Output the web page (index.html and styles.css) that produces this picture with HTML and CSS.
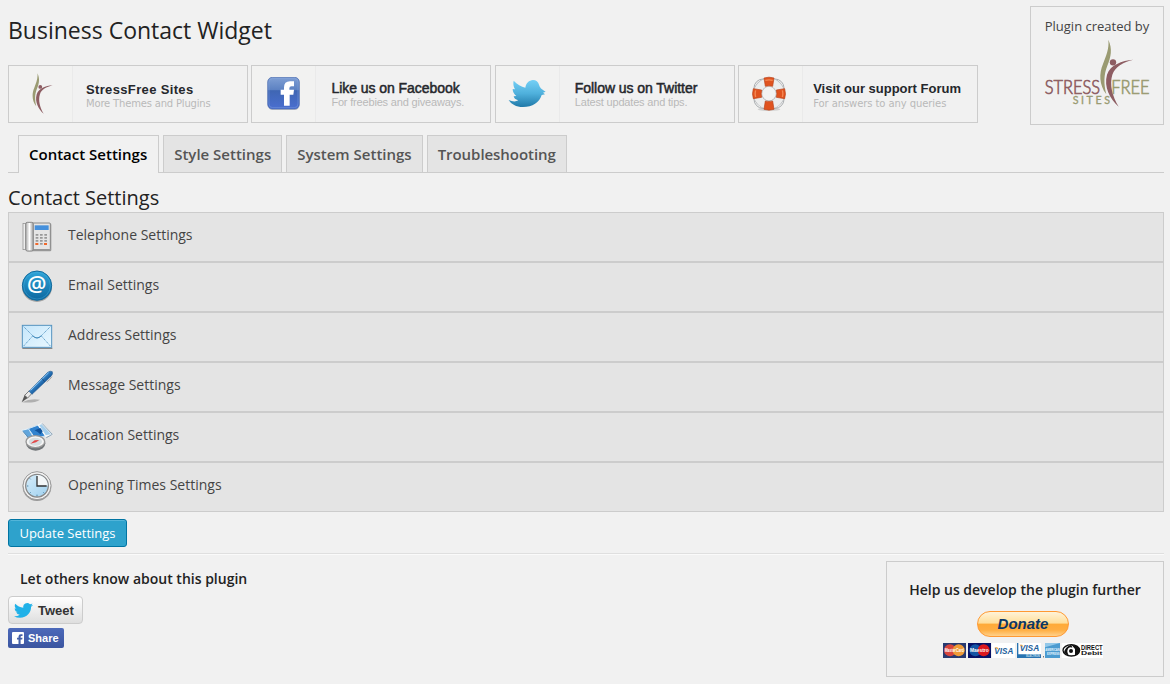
FILE: index.html
```html
<!DOCTYPE html>
<html lang="en">
<head>
<meta charset="utf-8">
<title>Business Contact Widget</title>
<link rel="stylesheet" href="styles.css">
</head>
<body>
<svg class="defs" width="0" height="0" aria-hidden="true">
  <defs>
    <symbol id="figure" viewBox="242 116 102 203">
      <path fill="#9a9b72" d="M268 117C271 145 261 165 252 190C240 218 240 252 262 281C254 250 254 222 265 195C276 168 281 145 268 117Z"/>
      <circle cx="282" cy="185" r="9.5" fill="#8d5d62"/>
      <path fill="#8d5d62" d="M343 177C308 180 274 192 264 222C254 258 272 294 299 318C280 286 271 252 280 222C288 198 312 185 343 177Z"/>
    </symbol>
    <symbol id="bird" viewBox="0 2 24 20">
      <path d="M23.953 4.57a10 10 0 01-2.825.775 4.958 4.958 0 002.163-2.723c-.951.555-2.005.959-3.127 1.184a4.92 4.92 0 00-8.384 4.482C7.69 8.095 4.067 6.13 1.64 3.162a4.822 4.822 0 00-.666 2.475c0 1.71.87 3.213 2.188 4.096a4.904 4.904 0 01-2.228-.616v.06a4.923 4.923 0 003.946 4.827 4.996 4.996 0 01-2.212.085 4.936 4.936 0 004.604 3.417 9.867 9.867 0 01-6.102 2.105c-.39 0-.779-.023-1.17-.067a13.995 13.995 0 007.557 2.209c9.053 0 13.998-7.496 13.998-13.985 0-.21 0-.42-.015-.63A9.935 9.935 0 0024 4.59z"/>
    </symbol>
    <linearGradient id="fbg" x1="0" y1="0" x2="0" y2="1"><stop offset="0" stop-color="#7f9fd4"/><stop offset=".4" stop-color="#5c81c2"/><stop offset=".42" stop-color="#3f66b3"/><stop offset="1" stop-color="#4a6fd0"/></linearGradient>
    <linearGradient id="twg" x1="0" y1="0" x2="0" y2="1"><stop offset="0" stop-color="#74d0f6"/><stop offset=".5" stop-color="#4fb0dc"/><stop offset="1" stop-color="#2079a8"/></linearGradient>
    <linearGradient id="mailg" x1="0" y1="0" x2="0" y2="1"><stop offset="0" stop-color="#2fa5d8"/><stop offset="1" stop-color="#0c67a0"/></linearGradient>
    <linearGradient id="metal" x1="0" y1="0" x2="1" y2="0"><stop offset="0" stop-color="#aaa"/><stop offset=".5" stop-color="#fff"/><stop offset="1" stop-color="#999"/></linearGradient>
    <linearGradient id="envg" x1="0" y1="0" x2="1" y2="1"><stop offset="0" stop-color="#c5e6fb"/><stop offset="1" stop-color="#e9f8ff"/></linearGradient>
    <linearGradient id="peng" x1="0" y1="0" x2="1" y2="1"><stop offset=".3" stop-color="#58a8e8"/><stop offset=".6" stop-color="#0f5599"/></linearGradient>
    <linearGradient id="faceg" x1="0" y1="0" x2="1" y2="1"><stop offset="0" stop-color="#d7edfa"/><stop offset="1" stop-color="#9fd0ee"/></linearGradient>
  </defs>
</svg>
<div class="page">
  <header class="top">
    <div class="top-main">
      <h1 class="title">Business Contact Widget</h1>
      <nav class="cards">
        <a class="card card-sites">
          <span class="card-icon"><svg width="21" height="41"><use href="#figure"/></svg></span>
          <span class="card-text"><b class="card-name">StressFree Sites</b><span class="card-sub">More Themes and Plugins</span></span>
        </a>
        <a class="card card-facebook">
          <span class="card-icon"><svg width="34" height="34" viewBox="81 49 102 102"><rect x="84" y="52" width="94" height="96" rx="14" fill="#999" opacity=".5"/><rect x="83" y="50" width="95" height="95" rx="14" fill="url(#fbg)" stroke="#4a6aae" stroke-width="2"/><rect x="87" y="54" width="87" height="87" rx="11" fill="none" stroke="#8baae0" stroke-width="2" opacity=".6"/><path fill="#fff" d="M132 135V102H122V87H132V80Q132 62 150 62H162V77H154Q148 77 148 83V87H162L160 102H149V135Z"/></svg></span>
          <span class="card-text"><b class="card-name">Like us on Facebook</b><span class="card-sub">For freebies and giveaways.</span></span>
        </a>
        <a class="card card-twitter">
          <span class="card-icon"><svg width="38" height="29" viewBox="55 57 114 87"><path fill="url(#twg)" d="M57 120C68 125 78 126 86 121C77 119 73 114 72 109L80 108C73 102 69 95 69 87L76 88C71 80 70 70 72 62C82 74 95 79 107 83C109 69 118 61 130 60C139 60 146 65 148 74C150 81 154 87 168 95L160 98L166 103L156 105C150 127 128 141 100 141C79 141 65 133 57 120Z"/></svg></span>
          <span class="card-text"><b class="card-name">Follow us on Twitter</b><span class="card-sub">Latest updates and tips.</span></span>
        </a>
        <a class="card card-forum">
          <span class="card-icon"><svg width="36" height="36" viewBox="64 48 108 108"><ellipse cx="118" cy="148" rx="34" ry="5" fill="#bbb" opacity=".6"/><g fill="none"><rect x="73" y="57" width="90" height="88" rx="27" stroke="#a9adb0" stroke-width="3"/><circle cx="118" cy="101" r="34" stroke="#b4b7ba" stroke-width="27"/><circle cx="118" cy="101" r="34" stroke="#eceded" stroke-width="23"/></g><g fill="#e0531f" stroke="#b8421a" stroke-width="2"><path d="M103 54Q118 49 133 54L129 79Q118 76 107 79Z"/><path d="M103 148Q118 153 133 148L129 123Q118 126 107 123Z"/><path d="M71 86Q66 101 71 116L96 112Q93 101 96 90Z"/><path d="M165 86Q170 101 165 116L140 112Q143 101 140 90Z"/></g><path d="M107 61Q118 58 129 61M78 91Q75 101 78 111M158 91Q161 101 158 111" fill="none" stroke="#f58a55" stroke-width="4"/></svg></span>
          <span class="card-text"><b class="card-name">Visit our support Forum</b><span class="card-sub">For answers to any queries</span></span>
        </a>
      </nav>
    </div>
    <aside class="creator">
      <span>Plugin created by</span>
      <svg class="creator-logo" width="108" height="69" viewBox="75 115 324 207"><svg x="242" y="116" width="102" height="203"><use href="#figure"/></svg><g font-family="Lato, sans-serif"><g font-weight="300" font-size="56" stroke-width="2"><text x="77" y="280" textLength="166" lengthAdjust="spacingAndGlyphs" fill="#8d5d62" stroke="#8d5d62">STRESS</text><text x="277" y="280" textLength="115" lengthAdjust="spacingAndGlyphs" fill="#9a9b72" stroke="#9a9b72">FREE</text></g><text x="161" y="311" textLength="112" font-size="32" fill="#9a9b72" stroke="#9a9b72">SITES</text></g></svg>
    </aside>
  </header>

  <nav class="tabs">
    <a class="tab tab-active">Contact Settings</a>
    <a class="tab">Style Settings</a>
    <a class="tab">System Settings</a>
    <a class="tab tab-last">Troubleshooting</a>
  </nav>

  <h2 class="section-title">Contact Settings</h2>
  <div class="rows">
    <div class="row"><svg class="row-icon" viewBox="60 30 102 108"><rect x="80" y="46" width="74" height="84" rx="4" fill="#999"/><rect x="79" y="45" width="72" height="80" rx="3" fill="#e5e5e5" stroke="#8a8a8a" stroke-width="3"/><path d="M104 52H146V66H104Z" fill="#4590dc"/><g fill="#999"><path d="M107 78h8v5h-8zM120 78h8v5h-8zM133 78h8v5h-8zM107 87h8v5h-8zM120 87h8v5h-8zM133 87h8v5h-8zM107 96h8v5h-8zM120 96h8v5h-8zM133 96h8v5h-8z"/></g><path fill="#f0682a" d="M106 105h9v6h-9zM132 105h9v6h-9z"/><path fill="#999" d="M120 105h8v5h-8z"/><rect x="69" y="46" width="10" height="79" fill="#eee" stroke="#888" stroke-width="2"/><rect x="77" y="43" width="23" height="86" rx="5" fill="url(#metal)" stroke="#888" stroke-width="3"/></svg>Telephone Settings</div>
    <div class="row"><svg class="row-icon" viewBox="60 180 102 108"><circle cx="111" cy="237" r="45" fill="#777" opacity=".6"/><circle cx="111" cy="233" r="44" fill="url(#mailg)" stroke="#126b9e" stroke-width="3"/><circle cx="111" cy="233" r="40" fill="none" stroke="#55bbe6" stroke-width="2" opacity=".5"/><text x="110" y="252" text-anchor="middle" font-family="Open Sans, sans-serif" font-size="65" font-weight="600" fill="#fff">@</text></svg>Email Settings</div>
    <div class="row"><svg class="row-icon" viewBox="60 330 102 108"><path d="M67 421H157" stroke="#888" stroke-width="4"/><rect x="67" y="352" width="88" height="66" fill="url(#envg)" stroke="#5594c0" stroke-width="3"/><g fill="none" stroke="#4f91bf" stroke-width="2.500" stroke-dasharray="4 2"><path d="M71 356L98 383Q111 396 124 383L151 356M71 414L98 384M151 414L124 384"/></g><path d="M98 383Q111 397 124 383" fill="none" stroke="#3f88ba" stroke-width="3"/></svg>Address Settings</div>
    <div class="row"><svg class="row-icon" viewBox="60 24 102 108"><path d="M66 127Q90 114 120 119Q105 130 66 127Z" fill="#999" opacity=".7"/><path d="M65 127L74 105L84 113Z" fill="#555"/><path d="M74 106L88 92L96 100L83 114Z" fill="#e8e8e8" stroke="#666" stroke-width="2.500"/><path d="M87 94L143 37Q151 31 157 35Q160 42 153 49L96 103Z" fill="url(#peng)" stroke="#174f88" stroke-width="1.500"/><path d="M92 91L146 38" stroke="#84c2f2" stroke-width="3"/><path d="M125 55L134 65" stroke="#123d68" stroke-width="2" fill="none"/><path d="M140 66Q150 59 156 50" stroke="#888" stroke-width="2" fill="none"/></svg>Message Settings</div>
    <div class="row"><svg class="row-icon" viewBox="60 174 102 108"><path d="M65 211L86 206L100 231L83 236Z" fill="#60a5dc" stroke="#e9f3fa" stroke-width="3"/><path d="M85 206L115 195L136 228L105 234Z" fill="#3182ce" stroke="#cce5f7" stroke-width="3"/><path d="M115 195L125 190L157 224L137 228Z" fill="#a5cfed" stroke="#f8f8f8" stroke-width="4"/><path d="M104 211L121 204L128 214L121 223L113 216Z" fill="#10539c"/><path d="M68 214L87 234M126 190L157 223L139 233" stroke="#5d7f98" stroke-width="2" fill="none"/><ellipse cx="107" cy="250" rx="29" ry="22" fill="#707477"/><ellipse cx="106" cy="245" rx="28" ry="18" fill="#f5f5f5" stroke="#999" stroke-width="4"/><ellipse cx="106" cy="245" rx="20" ry="12" fill="#d6dde0"/><path d="M91 251L104 241L118 240L108 247Z" fill="#e24747"/></svg>Location Settings</div>
    <div class="row"><svg class="row-icon" viewBox="60 324 102 108"><circle cx="111" cy="380" r="43" fill="#999"/><circle cx="111" cy="377" r="42" fill="#f2f2f2" stroke="#999" stroke-width="3"/><circle cx="111" cy="377" r="34" fill="url(#faceg)" stroke="#888" stroke-width="4"/><path d="M111 345A32 32 0 01143 377H111Z" fill="#f4f7f8"/><path d="M111 348V378H140" fill="none" stroke="#333" stroke-width="4"/><path d="M111 404v4M81 378h4M89 355l3 3M89 400l3-3M133 400l-3-3" stroke="#5087a9" stroke-width="3"/></svg>Opening Times Settings</div>
  </div>
  <button class="update">Update Settings</button>

  <footer class="bottom">
    <section class="share">
      <h3 class="share-title">Let others know about this plugin</h3>
      <a class="tweet"><svg width="19" height="15" fill="#20b1e8" viewBox="0 2 24 20" preserveAspectRatio="none"><use href="#bird" x="0" y="2" width="24" height="20"/></svg>Tweet</a>
      <a class="fb"><svg width="12" height="12" viewBox="0 0 12 12"><rect width="12" height="12" rx="1" fill="#fff"/><path fill="#4460a8" d="M6.500 12V7.600H5V5.700h1.500V4.600Q6.500 2.200 8.900 2.200H10.500V4.100H9.500Q8.600 4.100 8.600 4.900V5.700H10.500L10.200 7.600H8.600V12Z"/></svg>Share</a>
    </section>
    <aside class="donate">
      <h3 class="donate-title">Help us develop the plugin further</h3>
      <a class="donate-btn">Donate</a>
      <svg class="payments" width="160" height="15" viewBox="24 114 480 45" font-family="Liberation Sans, sans-serif" font-weight="700">
        <rect x="24" y="114" width="69" height="45" fill="#293a70"/><circle cx="45" cy="136" r="18" fill="#d9453d"/><circle cx="71" cy="136" r="18" fill="#ef9b37"/><text x="29" y="141" font-size="14" textLength="58" lengthAdjust="spacingAndGlyphs" fill="#fff">MasterCard</text>
        <rect x="99" y="114" width="69" height="45" fill="#071267"/><circle cx="121" cy="136" r="18" fill="#1454a4"/><circle cx="146" cy="136" r="18" fill="#dc171e"/><text x="105" y="141" font-size="14" textLength="56" lengthAdjust="spacingAndGlyphs" fill="#fff">Maestro</text>
        <rect x="171" y="114" width="69" height="45" fill="#fff"/><text x="178" y="146" font-size="27" font-style="italic" textLength="57" lengthAdjust="spacingAndGlyphs" fill="#1d609c">VISA</text><path d="M178 127h9l5 8z" fill="#e9a33c"/>
        <rect x="246" y="114" width="72" height="45" fill="#fff"/><path d="M246 114h4v45h-4zM250 148h68v11h-68z" fill="#2873b1"/><text x="254" y="139" font-size="26" font-style="italic" textLength="59" lengthAdjust="spacingAndGlyphs" fill="#1d609c">VISA</text><path d="M253 119h8l5 7z" fill="#e9a33c"/><text x="274" y="156" font-size="8" textLength="40" lengthAdjust="spacingAndGlyphs" fill="#d3e4f1">ELECTRON</text>
        <rect x="324" y="154" width="3" height="3" fill="#333"/>
        <rect x="330" y="114" width="45" height="45" fill="#4c9bd0"/><path d="M330 114h45l-45 13z" fill="#93c8e9"/><text x="331" y="137" font-size="12" textLength="43" lengthAdjust="spacingAndGlyphs" fill="#e8f5ff">AMERICAN</text><text x="336" y="149" font-size="12" textLength="38" lengthAdjust="spacingAndGlyphs" fill="#e8f5ff">EXPRESS</text>
        <rect x="380" y="114" width="124" height="45" fill="#fff"/><ellipse cx="409" cy="136" rx="25" ry="17" fill="#fff" stroke="#111" stroke-width="4"/><path d="M409 119L420 132V152Q433 148 434 136Q432 120 409 119Z" fill="#111"/><path d="M409 119Q390 126 387 142Q392 150 402 152Q393 140 400 130Q405 125 412 128Z" fill="#111"/><circle cx="408" cy="138" r="6" fill="#111"/><text x="438" y="136" font-size="19" textLength="65" lengthAdjust="spacingAndGlyphs" fill="#111">DIRECT</text><text x="438" y="150" font-size="17" textLength="64" lengthAdjust="spacingAndGlyphs" fill="#111">Debit</text>
      </svg>
    </aside>
  </footer>
</div>
</body>
</html>
```
FILE: styles.css
```css
* { box-sizing: border-box; }
body { margin: 0; background: #f1f1f1; color: #444; font: 13px/1.4 "Open Sans", sans-serif; }
.defs { display: block; height: 0; }
.page { padding: 6px 6px 0 8px; }
svg { display: block; flex: none; }
h1, h2, h3 { margin: 0; font-weight: 400; color: #222; }

.top { display: flex; justify-content: space-between; height: 119px; }
.title { height: 59px; padding-top: 8px; font-size: 23px; line-height: 33px; }
.cards { display: flex; gap: 3.4px; }
.card { display: flex; width: 240px; height: 58px; border: 1px solid #ccc; font-family: "Liberation Sans", Arial, sans-serif; white-space: nowrap; }
.card-icon { display: flex; align-items: center; justify-content: center; width: 64px; border-right: 1px solid #eaeaea; background: #f2f2f1; }
.card-text { display: flex; flex-direction: column; padding: 16px 0 0 13px; }
.card-name { color: #25272c; font-size: 13px; line-height: 16px; letter-spacing: .35px; }
.card-sub { margin-top: -1px; color: #b9b9b9; font-family: "DejaVu Sans", Verdana, sans-serif; font-size: 10px; line-height: 13px; letter-spacing: -.18px; }
.card-sites .card-icon { padding: 0 0 2px 4px; }
.card-facebook .card-text, .card-twitter .card-text { padding: 14px 0 0 15px; }
.card-facebook .card-name, .card-twitter .card-name { font-size: 14px; font-weight: 400; letter-spacing: -.05px; line-height: 17px; -webkit-text-stroke: .5px #25272c; }
.card-facebook .card-sub, .card-twitter .card-sub { font-family: "Liberation Sans", Arial, sans-serif; font-size: 11px; }
.card-twitter .card-icon { padding-bottom: 2px; }
.card-forum .card-icon { padding-right: 3px; }
.card-forum .card-text { padding: 15px 0 0 10px; }
.card-forum .card-name { letter-spacing: 0; }
.card-forum .card-sub { margin-top: 0; letter-spacing: -.08px; }

.creator { display: flex; flex-direction: column; align-items: center; width: 134px; height: 119px; padding-top: 10px; border: 1px solid #ccc; line-height: 18px; }
.creator-logo { margin: 4px 0 0 2px; }

.tabs { display: flex; gap: 4px; height: 38px; margin-top: 10px; padding-left: 10px; border-bottom: 1px solid #ccc; }
.tab { height: 37px; padding: 6px 10px; border: 1px solid #ccc; border-bottom: 0; background: #e4e4e4; color: #555; font-size: 15px; font-weight: 600; line-height: 24px; white-space: nowrap; }
.tab-active { height: 38px; padding-right: 11px; background: #f1f1f1; color: #000; }
.tab-last { letter-spacing: -.05px; }

.section-title { height: 39px; padding-top: 10px; font-size: 20px; line-height: 29px; }
.row { display: flex; align-items: flex-start; height: 50px; border: 1px solid #ccc; background: #e4e4e4; padding-left: 11px; font-size: 14px; line-height: 44px; }
.row-icon { width: 34px; height: 36px; margin: 5px 14px 0 0; }

.update { display: block; width: 119px; height: 28px; margin-top: 7px; padding: 0; border: 1px solid #0074a2; border-radius: 3px; background: #2ea2cc; box-shadow: inset 0 1px 0 rgba(120, 200, 230, .5); color: #fff; font: 13px/26px "Open Sans", sans-serif; }

.bottom { display: flex; justify-content: space-between; margin-top: 6px; border-top: 1px solid #dfdfdf; box-shadow: inset 0 1px 0 #fafafa; }
.share-title { padding: 14px 0 0 12px; font-size: 14px; font-weight: 600; line-height: 22px; }
.tweet { display: flex; align-items: center; gap: 5px; width: 75px; height: 28px; margin-top: 6px; padding-left: 5px; border: 1px solid #ccc; border-radius: 4px; background: linear-gradient(#fff, #dedede); color: #333; font: bold 13px "Liberation Sans", Arial, sans-serif; }
.fb { display: flex; align-items: center; gap: 4px; width: 56px; height: 20px; margin-top: 4px; padding-left: 4px; border-radius: 2px; background: linear-gradient(#4c69ba, #3b55a0); color: #fff; font: bold 11px "Liberation Sans", Arial, sans-serif; }
.donate { display: flex; flex-direction: column; align-items: center; width: 278px; height: 116px; margin-top: 7px; padding-top: 17px; border: 1px solid #ccc; }
.donate-title { font-size: 14px; font-weight: 600; line-height: 22px; }
.donate-btn { width: 92px; height: 26px; margin: 10px 4px 0 0; border: 1px solid #ff9933; border-radius: 13px; background: linear-gradient(#fff3d8, #ffdf9c 45%, #ffaa38 52%, #ffae42 75%, #ffd18b); color: #0b3766; font: italic bold 15px/24px "Liberation Sans", Arial, sans-serif; text-align: center; }
.payments { margin: 6px 4px 0 0; }
```
